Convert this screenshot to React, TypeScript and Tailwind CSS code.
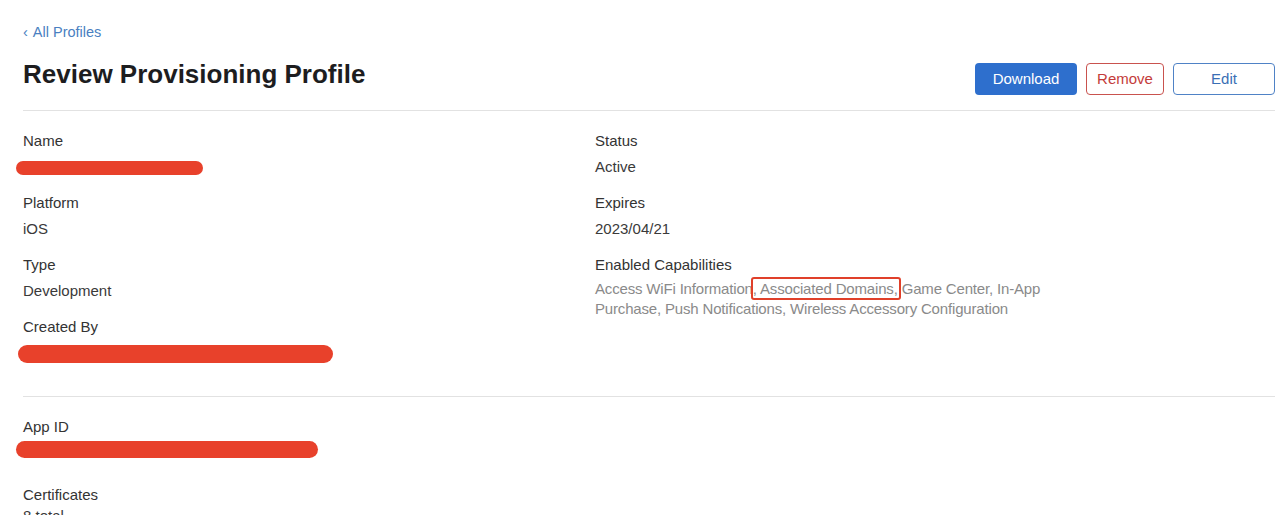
const Redacted = ({ className }: { className: string }) => (
  <div className={`rounded-full bg-[#e8412b] ${className}`} />
);

const Field = ({ label, children, gap = "mt-[6px]" }: { label: string; children: React.ReactNode; gap?: string }) => (
  <div className="mb-4">
    <div className="text-[15px] leading-5 text-[#333]">{label}</div>
    <div className={`${gap} min-h-5 text-[15px] leading-5 text-[#3a3a3a]`}>{children}</div>
  </div>
);

export default function App() {
  return (
    <div className="min-h-[515px] bg-white pl-[23px] pr-[5px] pt-[22px] font-['Liberation_Sans',Arial,sans-serif]">
      <a className="flex items-center text-[14.5px] leading-5 text-[#4a7fc1]">
        <span className="mr-[5px]">‹</span>All Profiles
      </a>

      <div className="mt-4 flex items-start justify-between border-b border-[#e2e2e2] pb-[15px]">
        <h1 className="text-[26px] font-bold leading-8 text-[#1d1d1f]">Review Provisioning Profile</h1>
        <div className="mt-[5px] flex gap-[9px]">
          <button className="h-8 w-[102px] rounded-[4px] bg-[#2e6fcd] text-[15px] text-white">Download</button>
          <button className="h-8 w-[78px] rounded-[4px] border border-[#c9524e] text-[15px] text-[#c43c3a]">Remove</button>
          <button className="h-8 w-[102px] rounded-[4px] border border-[#4f82c6] text-[15px] text-[#3a6fb5]">Edit</button>
        </div>
      </div>

      <div className="grid grid-cols-[572px_1fr] border-b border-[#e2e2e2] pt-5 pb-[17px]">
        <div>
          <Field label="Name">
            <div className="flex h-5 items-center">
              <Redacted className="-ml-[7px] mt-[2px] h-[14px] w-[187px]" />
            </div>
          </Field>
          <Field label="Platform">iOS</Field>
          <Field label="Type">Development</Field>
          <Field label="Created By">
            <div className="flex h-5 items-center">
              <Redacted className="-ml-[5px] mt-[1px] h-[18px] w-[315px]" />
            </div>
          </Field>
        </div>
        <div>
          <Field label="Status">Active</Field>
          <Field label="Expires">2023/04/21</Field>
          <Field label="Enabled Capabilities" gap="mt-[4px]">
            <p className="max-w-[450px] tracking-[-0.17px] text-[#8a8a8a]">
              Access WiFi Information
              <span className="relative">
                {", Associated Domains,"}
                <span className="absolute -top-[3px] -bottom-[3px] -left-[2px] -right-[3px] rounded-[3px] border-2 border-[#e0402a]" />
              </span>{" "}
              Game Center, In-App Purchase, Push Notifications, Wireless Accessory Configuration
            </p>
          </Field>
        </div>
      </div>

      <div className="pt-5">
        <div className="text-[15px] leading-5 text-[#333]">App ID</div>
        <div className="mt-[2px] flex h-5 items-center">
          <Redacted className="-ml-[7px] h-[17px] w-[302px] rounded-[5px]" />
        </div>
        <div className="mt-[26px] text-[15px] leading-5 text-[#333]">Certificates</div>
        <div className="mt-[1px] text-[15px] leading-5 text-[#3a3a3a]">8 total</div>
      </div>
    </div>
  );
}
